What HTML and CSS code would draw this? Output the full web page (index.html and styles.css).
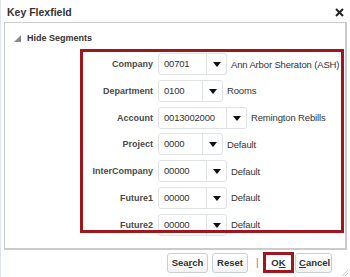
FILE: index.html
```html
<!DOCTYPE html>
<html>
<head>
<meta charset="utf-8">
<link rel="stylesheet" href="styles.css">
</head>
<body>
<div class="dialog">
  <div class="header">
    <span class="title">Key Flexfield</span>
    <svg class="close" width="9" height="9" viewBox="0 0 9 9"><path d="M1 1 L8 8 M8 1 L1 8" stroke="#222" stroke-width="2"/></svg>
  </div>
  <div class="panel">
    <div class="disclosure">
      <svg width="7" height="7" viewBox="0 0 7 7"><polygon points="7,0 7,7 0,7" fill="#8a8a8a"/></svg>
      <span>Hide Segments</span>
    </div>
    <div class="form">
      <label>Company</label>
      <div class="field"><div class="combo"><span class="val" style="width:47px">00701</span><span class="btn"><i></i></span></div><span class="desc">Ann Arbor Sheraton (ASH)</span></div>
      <label>Department</label>
      <div class="field"><div class="combo"><span class="val" style="width:43px">0100</span><span class="btn"><i></i></span></div><span class="desc">Rooms</span></div>
      <label>Account</label>
      <div class="field"><div class="combo"><span class="val" style="width:67px">0013002000</span><span class="btn"><i></i></span></div><span class="desc">Remington Rebills</span></div>
      <label>Project</label>
      <div class="field"><div class="combo"><span class="val" style="width:43px">0000</span><span class="btn"><i></i></span></div><span class="desc">Default</span></div>
      <label>InterCompany</label>
      <div class="field"><div class="combo"><span class="val" style="width:47px">00000</span><span class="btn"><i></i></span></div><span class="desc">Default</span></div>
      <label>Future1</label>
      <div class="field"><div class="combo"><span class="val" style="width:47px">00000</span><span class="btn"><i></i></span></div><span class="desc">Default</span></div>
      <label>Future2</label>
      <div class="field"><div class="combo"><span class="val" style="width:47px">00000</span><span class="btn"><i></i></span></div><span class="desc">Default</span></div>
    </div>
    <div class="annot-box"></div>
  </div>
  <div class="footer">
    <button class="b b-search">Sea<u>r</u>ch</button>
    <button class="b b-reset">Reset</button>
    <span class="sep">|</span>
    <span class="ok-wrap"><button class="b b-ok">O<u>K</u></button></span>
    <button class="b b-cancel"><u>C</u>ancel</button>
    <svg class="grip" width="8" height="8" viewBox="0 0 8 8"><path d="M7 1 L1 7 M7 4 L4 7" stroke="#c8c8c8" stroke-width="1"/></svg>
  </div>
</div>
</body>
</html>
```
FILE: styles.css
```css
html, body {
  margin: 0;
  padding: 0;
  background: #fff;
}
body {
  font-family: "Liberation Sans", Arial, sans-serif;
  color: #333;
}
.dialog {
  width: 350px;
  height: 277px;
  box-sizing: border-box;
  border-left: 1px solid #dfe5ea;
  position: relative;
  background: #fff;
}
.header {
  height: 22px;
  display: flex;
  align-items: center;
  justify-content: space-between;
  padding: 0 6px 0 6px;
}
.title {
  font-weight: bold;
  font-size: 10.5px;
  color: #333;
  position: relative;
  top: 1px;
}
.close {
  position: relative;
  top: 1px;
  margin-right: 0;
}
.panel {
  position: relative;
  margin-left: 3px;
  width: 343px;
  height: 228px;
  box-sizing: border-box;
  border: 1px solid #cbcbcb;
  border-width: 1px 2px 2px 1px;
  background: #fff;
}
.disclosure {
  display: flex;
  align-items: center;
  height: 14px;
  margin-top: 8px;
  padding-left: 9px;
  gap: 6px;
  font-weight: bold;
  font-size: 9px;
  color: #333;
}
.form {
  display: grid;
  grid-template-columns: 148px auto;
  column-gap: 5px;
  row-gap: 4.8px;
  margin-top: 8px;
  align-items: center;
}
.form label {
  text-align: right;
  font-weight: bold;
  font-size: 9px;
  color: #4a4a4a;
}
.field {
  display: flex;
  align-items: center;
  gap: 4px;
}
.combo {
  display: flex;
  height: 22px;
  box-sizing: border-box;
  border: 1px solid #dfe3e6;
  border-radius: 3px;
  background: #fff;
}
.val {
  box-sizing: border-box;
  padding-left: 5px;
  font-size: 9.5px;
  letter-spacing: -0.2px;
  line-height: 20px;
  color: #333;
}
.btn {
  width: 20px;
  box-sizing: border-box;
  border-left: 1px solid #dfe3e6;
  display: flex;
  align-items: center;
  justify-content: center;
}
.btn i {
  width: 0;
  height: 0;
  border-left: 4px solid transparent;
  border-right: 4px solid transparent;
  border-top: 5px solid #111;
  margin-top: 1px;
}
.desc {
  font-size: 9.5px;
  letter-spacing: -0.15px;
  color: #333;
  white-space: nowrap;
}
.annot-box {
  position: absolute;
  left: 75px;
  top: 26px;
  width: 264px;
  height: 184px;
  box-sizing: border-box;
  border: 3px solid #a0161f;
}
.footer {
  position: relative;
  display: flex;
  align-items: center;
  justify-content: flex-end;
  padding-right: 18px;
  margin-top: 2px;
}
.b {
  height: 20px;
  box-sizing: border-box;
  border: 1px solid #c6d0d8;
  border-radius: 3px;
  background: linear-gradient(#fff, #f3f3f3);
  font-family: "Liberation Sans", Arial, sans-serif;
  font-weight: bold;
  font-size: 9.5px;
  color: #333;
  padding: 0 3px;
  margin: 0;
}
.b u {
  text-decoration-thickness: 1px;
}
.b-search { width: 41px; }
.b-reset { width: 36px; margin-left: 4px; }
.sep {
  font-size: 10px;
  color: #777;
  width: 15px;
  padding-left: 8px;
  box-sizing: border-box;
}
.ok-wrap {
  display: flex;
  box-sizing: border-box;
  border: 3px solid #a0161f;
  width: 31px;
  height: 21px;
  align-items: center;
  justify-content: center;
  margin-right: 1px;
}
.b-ok {
  border: none;
  background: #fff;
  height: 15px;
  padding: 0 2px;
}
.b-cancel { width: 37px; }
.grip {
  position: absolute;
  right: 1px;
  bottom: -4px;
}
```
